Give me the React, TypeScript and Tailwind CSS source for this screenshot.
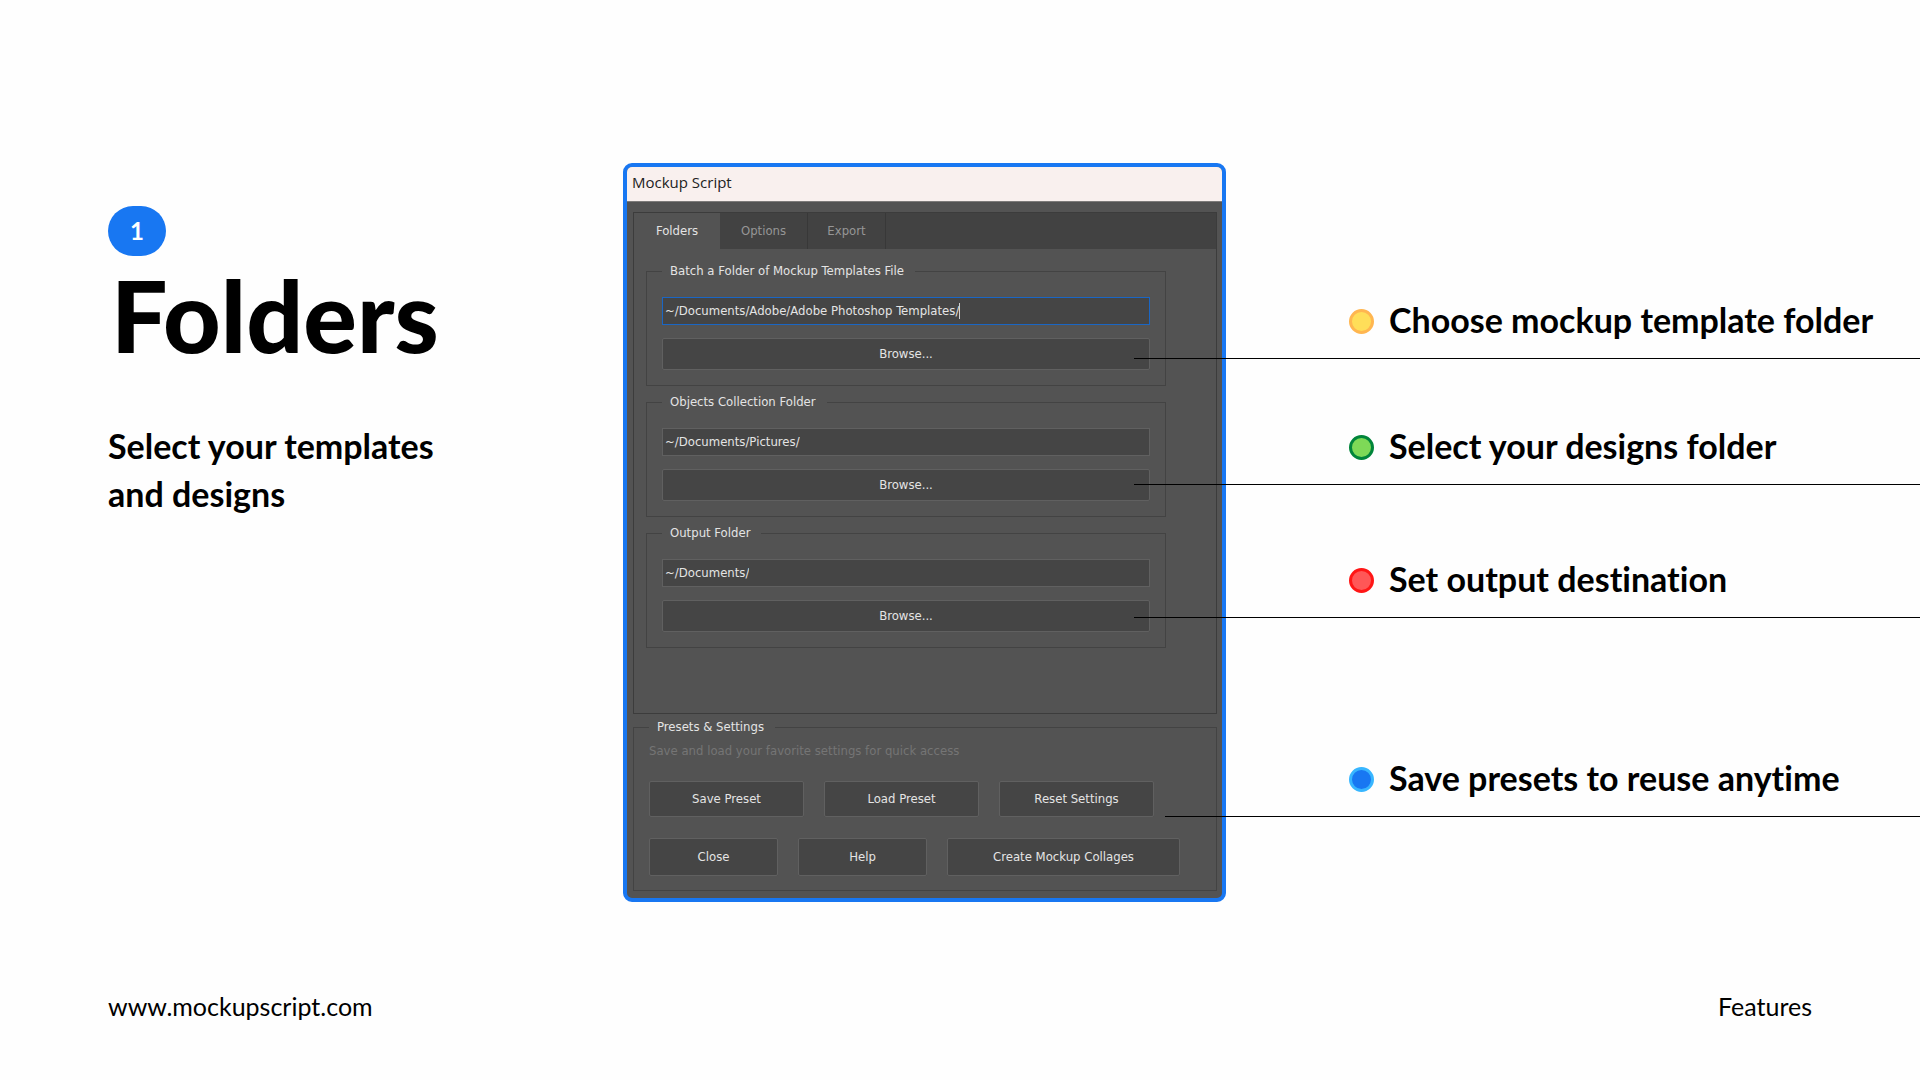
import { useState } from "react";

type FolderGroup = {
  id: string;
  legend: string;
  path: string;
  focused?: boolean;
  className: string;
};

const folderGroups: FolderGroup[] = [
  {
    id: "templates",
    legend: "Batch a Folder of Mockup Templates File",
    path: "~/Documents/Adobe/Adobe Photoshop Templates/",
    focused: true,
    className: "mt-[13px]",
  },
  {
    id: "objects",
    legend: "Objects Collection Folder",
    path: "~/Documents/Pictures/",
    className: "mt-[7px]",
  },
  {
    id: "output",
    legend: "Output Folder",
    path: "~/Documents/",
    className: "mt-[7px]",
  },
];

const callouts = [
  {
    text: "Choose mockup template folder",
    dot: "border-[#ffb650] bg-[#ffde59]",
    row: "h-[120px] pl-[215px]",
  },
  {
    text: "Select your designs folder",
    dot: "border-[#00853a] bg-[#7ed957]",
    row: "h-[126px] pl-[215px]",
  },
  {
    text: "Set output destination",
    dot: "border-[#ff1616] bg-[#ff5757]",
    row: "h-[133px] pl-[215px]",
  },
  {
    text: "Save presets to reuse anytime",
    dot: "border-[#38b6ff] bg-[#1877f2]",
    row: "h-[199px] ml-[31px] pl-[184px]",
  },
];

const buttonStyle =
  "rounded-[2px] border border-[#606060] bg-[#454545] text-center text-[#e4e4e4]";

function FolderFieldset({ group }: { group: FolderGroup }) {
  const [path, setPath] = useState(group.path);

  return (
    <fieldset
      className={`${group.className} mr-[50px] ml-[12px] border border-[#434343] px-[15px] pb-[15px]`}
    >
      <legend className="h-[18px] pr-[11px] pl-[8px] leading-[18px] text-[#e4e4e4]">
        {group.legend}
      </legend>
      <div
        className={`mt-[17px] flex h-[28px] items-center border bg-[#454545] px-[2px] ${
          group.focused ? "border-[#1a66c4]" : "border-[#606060]"
        }`}
      >
        <input
          id={group.id}
          type="text"
          aria-label={group.legend}
          value={path}
          onChange={(e) => setPath(e.target.value)}
          className="field-sizing-content h-[22px] bg-transparent pb-[2px] text-[#e4e4e4] outline-none"
        />
        {group.focused && <span className="h-[16px] w-px bg-[#d0d0d0]" />}
      </div>
      <button type="button" className={`${buttonStyle} mt-[13px] block h-[32px] w-full`}>
        Browse...
      </button>
    </fieldset>
  );
}

function ScriptDialog() {
  return (
    <section className="w-[603px] shrink-0 overflow-hidden rounded-[9px] border-4 border-[#1877f2] bg-[#535353] font-['DejaVu_Sans_Condensed','DejaVu_Sans',sans-serif] text-[13px]">
      <h2 className="h-[35px] border-b border-[#7d7b7a] bg-[#f9f0ee] pl-[5px] font-['Open_Sans',sans-serif] text-[15px] leading-[31px] text-[#222]">
        Mockup Script
      </h2>

      <div className="pt-[10px] pr-[5px] pb-[7px] pl-[6px]">
        {/* Tabs */}
        <div className="h-[502px] border border-[#3c3c3c]">
          <div role="tablist" className="flex h-[36px] bg-[#424242] text-[#969696]">
            <button type="button" role="tab" aria-selected="true" className="w-[86px] bg-[#535353] text-[#e4e4e4]">
              Folders
            </button>
            <button type="button" role="tab" aria-selected="false" className="w-[88px] border-r border-[#383838]">
              Options
            </button>
            <button type="button" role="tab" aria-selected="false" className="w-[78px] border-r border-[#383838]">
              Export
            </button>
          </div>
          {folderGroups.map((group) => (
            <FolderFieldset key={group.id} group={group} />
          ))}
        </div>

        {/* Presets */}
        <fieldset className="mt-[4px] border border-[#434343] px-[15px] pb-[14px]">
          <legend className="h-[18px] pr-[11px] pl-[8px] leading-[18px] text-[#e4e4e4]">
            Presets &amp; Settings
          </legend>
          <p className="mt-[5px] leading-[20px] text-[#757575]">
            Save and load your favorite settings for quick access
          </p>
          <div className="mt-[20px] flex gap-[20px]">
            <button type="button" className={`${buttonStyle} h-[36px] w-[155px]`}>Save Preset</button>
            <button type="button" className={`${buttonStyle} h-[36px] w-[155px]`}>Load Preset</button>
            <button type="button" className={`${buttonStyle} h-[36px] w-[155px]`}>Reset Settings</button>
          </div>
          <div className="mt-[21px] flex gap-[20px]">
            <button type="button" className={`${buttonStyle} h-[38px] w-[129px]`}>Close</button>
            <button type="button" className={`${buttonStyle} h-[38px] w-[129px]`}>Help</button>
            <button type="button" className={`${buttonStyle} h-[38px] w-[233px]`}>Create Mockup Collages</button>
          </div>
        </fieldset>
      </div>
    </section>
  );
}

export default function App() {
  return (
    <div className="flex min-h-screen flex-col bg-[#fefefe] font-['Lato',sans-serif] text-black [font-variant-ligatures:none]">
      <main className="flex flex-1 items-start pt-[163px]">
        {/* Intro */}
        <div className="w-[623px] shrink-0 pt-[43px] pl-[108px]">
          <span className="flex h-[50px] w-[58px] items-center justify-center rounded-full bg-[#1877f2] text-[24px] font-bold text-white">
            1
          </span>
          <h1 className="mt-[8px] pl-[3px] text-[100px] leading-[100px] font-black">Folders</h1>
          <p className="mt-[58px] text-[34px] leading-[48px] font-bold">
            Select your templates
            <br />
            and designs
          </p>
        </div>

        <ScriptDialog />

        {/* Callouts, their rules run over the dialog's edge */}
        <ul className="z-10 mt-[76px] -ml-[92px] min-w-0 flex-1">
          {callouts.map((callout) => (
            <li
              key={callout.text}
              className={`${callout.row} flex items-end gap-[15px] border-b border-black pb-[18px]`}
            >
              <span className={`${callout.dot} mb-[6px] size-[25px] shrink-0 rounded-full border-3`} />
              <span className="text-[34px] leading-[40px] font-bold whitespace-nowrap">{callout.text}</span>
            </li>
          ))}
        </ul>
      </main>

      <footer className="flex items-center justify-between px-[108px] pb-[56px] text-[25px] leading-[36px]">
        <a href="https://www.mockupscript.com">www.mockupscript.com</a>
        <span>Features</span>
      </footer>
    </div>
  );
}
